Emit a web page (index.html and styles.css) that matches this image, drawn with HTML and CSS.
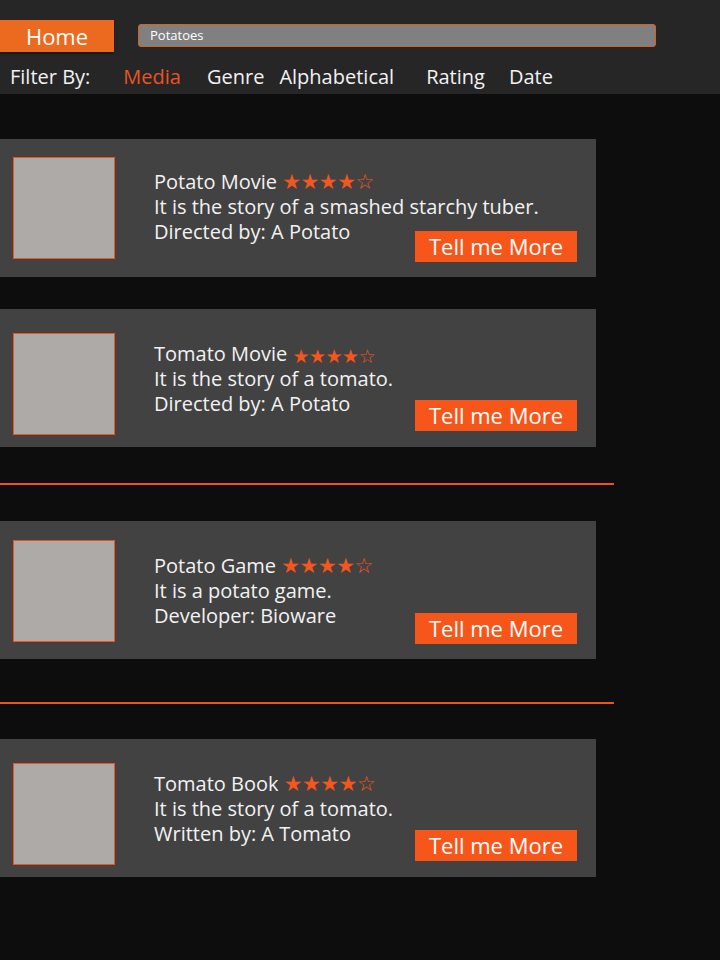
FILE: index.html
```html
<!DOCTYPE html>
<html lang="en">
<head>
<meta charset="utf-8">
<title>Potatoes</title>
<link rel="stylesheet" href="styles.css">
</head>
<body>
<header class="topbar">
  <div class="toprow">
    <button class="home">Home</button>
    <div class="search">Potatoes</div>
  </div>
  <nav class="filters">
    <span class="filter-label">Filter By:</span>
    <span class="filter active f-media">Media</span>
    <span class="filter f-genre">Genre</span>
    <span class="filter f-alpha">Alphabetical</span>
    <span class="filter f-rating">Rating</span>
    <span class="filter f-date">Date</span>
  </nav>
</header>
<main class="list">
  <article class="card card-a">
    <div class="thumb"></div>
    <div class="info">
      <div class="title">Potato Movie <span class="stars">★★★★☆</span></div>
      <div class="line">It is the story of a smashed starchy tuber.</div>
      <div class="line">Directed by: A Potato</div>
    </div>
    <button class="more">Tell me More</button>
  </article>
  <article class="card card-b">
    <div class="thumb"></div>
    <div class="info">
      <div class="title">Tomato Movie <span class="stars sm">★★★★☆</span></div>
      <div class="line">It is the story of a tomato.</div>
      <div class="line">Directed by: A Potato</div>
    </div>
    <button class="more">Tell me More</button>
  </article>
  <hr class="sep sep1">
  <article class="card card-c">
    <div class="thumb"></div>
    <div class="info">
      <div class="title">Potato Game <span class="stars">★★★★☆</span></div>
      <div class="line">It is a potato game.</div>
      <div class="line">Developer: Bioware</div>
    </div>
    <button class="more">Tell me More</button>
  </article>
  <hr class="sep sep2">
  <article class="card card-d">
    <div class="thumb"></div>
    <div class="info">
      <div class="title">Tomato Book <span class="stars">★★★★☆</span></div>
      <div class="line">It is the story of a tomato.</div>
      <div class="line">Written by: A Tomato</div>
    </div>
    <button class="more">Tell me More</button>
  </article>
</main>
</body>
</html>
```
FILE: styles.css
```css
html, body {
  margin: 0;
  padding: 0;
  background: #0d0d0d;
  font-family: "Open Sans", "Noto Sans", sans-serif;
  color: #f2f2f2;
}

.topbar {
  background: #262626;
  height: 94px;
  box-sizing: border-box;
  padding-top: 20px;
}

.toprow {
  display: flex;
  align-items: flex-start;
}

.home {
  width: 114px;
  height: 32px;
  background: #ec6a1f;
  color: #fff;
  border: none;
  font-family: inherit;
  font-size: 22px;
  padding: 0;
  line-height: 32px;
  box-shadow: 0 2px 2px rgba(0,0,0,0.35);
}

.search {
  margin-left: 24px;
  margin-top: 4px;
  width: 518px;
  height: 23px;
  box-sizing: border-box;
  background: #808080;
  border: 1px solid #d9611a;
  border-radius: 3px;
  color: #fff;
  font-size: 13px;
  line-height: 21px;
  padding-left: 11px;
}

.filters {
  display: flex;
  margin-top: 12px;
  font-size: 20px;
  line-height: 26px;
  color: #f2f2f2;
}

.filter-label { margin-left: 10px; }
.f-media { margin-left: 33px; color: #ea5423; }
.f-genre { margin-left: 26px; }
.f-alpha { margin-left: 15px; }
.f-rating { margin-left: 32px; }
.f-date { margin-left: 24px; }

.list {
  display: flex;
  flex-direction: column;
  padding-top: 45px;
}

.card {
  width: 596px;
  height: 138px;
  background: #424242;
  display: flex;
  align-items: flex-start;
  box-sizing: border-box;
  padding-left: 13px;
}

.card-b { margin-top: 32px; }

.thumb {
  width: 102px;
  height: 102px;
  box-sizing: border-box;
  background: #aeaaa8;
  border: 1px solid #f0521c;
  margin-top: 18px;
  flex: none;
}

.card-b .thumb, .card-d .thumb { margin-top: 24px; }
.card-c .thumb { margin-top: 19px; }

.info {
  margin-left: 39px;
  margin-top: 30px;
  font-size: 20px;
  line-height: 25px;
  width: 261px;
  white-space: nowrap;
  flex: none;
}

.title { height: 25px; }

.card-b .info, .card-c .info, .card-d .info { margin-top: 32px; }

.stars {
  color: #f4561c;
  font-size: 21px;
  font-family: "DejaVu Sans", sans-serif;
  letter-spacing: -0.5px;
  line-height: 1;
}

.stars.sm { font-size: 19px; vertical-align: -2px; }

.more {
  margin-top: 92px;
  margin-left: auto;
  margin-right: 19px;
  width: 162px;
  height: 31px;
  background: #f7561b;
  border: none;
  color: #fff;
  font-family: inherit;
  font-size: 22px;
  line-height: 31px;
  padding: 0;
  flex: none;
}

.card-b .more, .card-d .more { margin-top: 91px; }

.sep {
  width: 614px;
  height: 2px;
  border: none;
  background: #f0521c;
  margin: 0;
}

.sep1 { margin-top: 36px; }
.card-c { margin-top: 36px; }
.sep2 { margin-top: 43px; }
.card-d { margin-top: 35px; }
```
